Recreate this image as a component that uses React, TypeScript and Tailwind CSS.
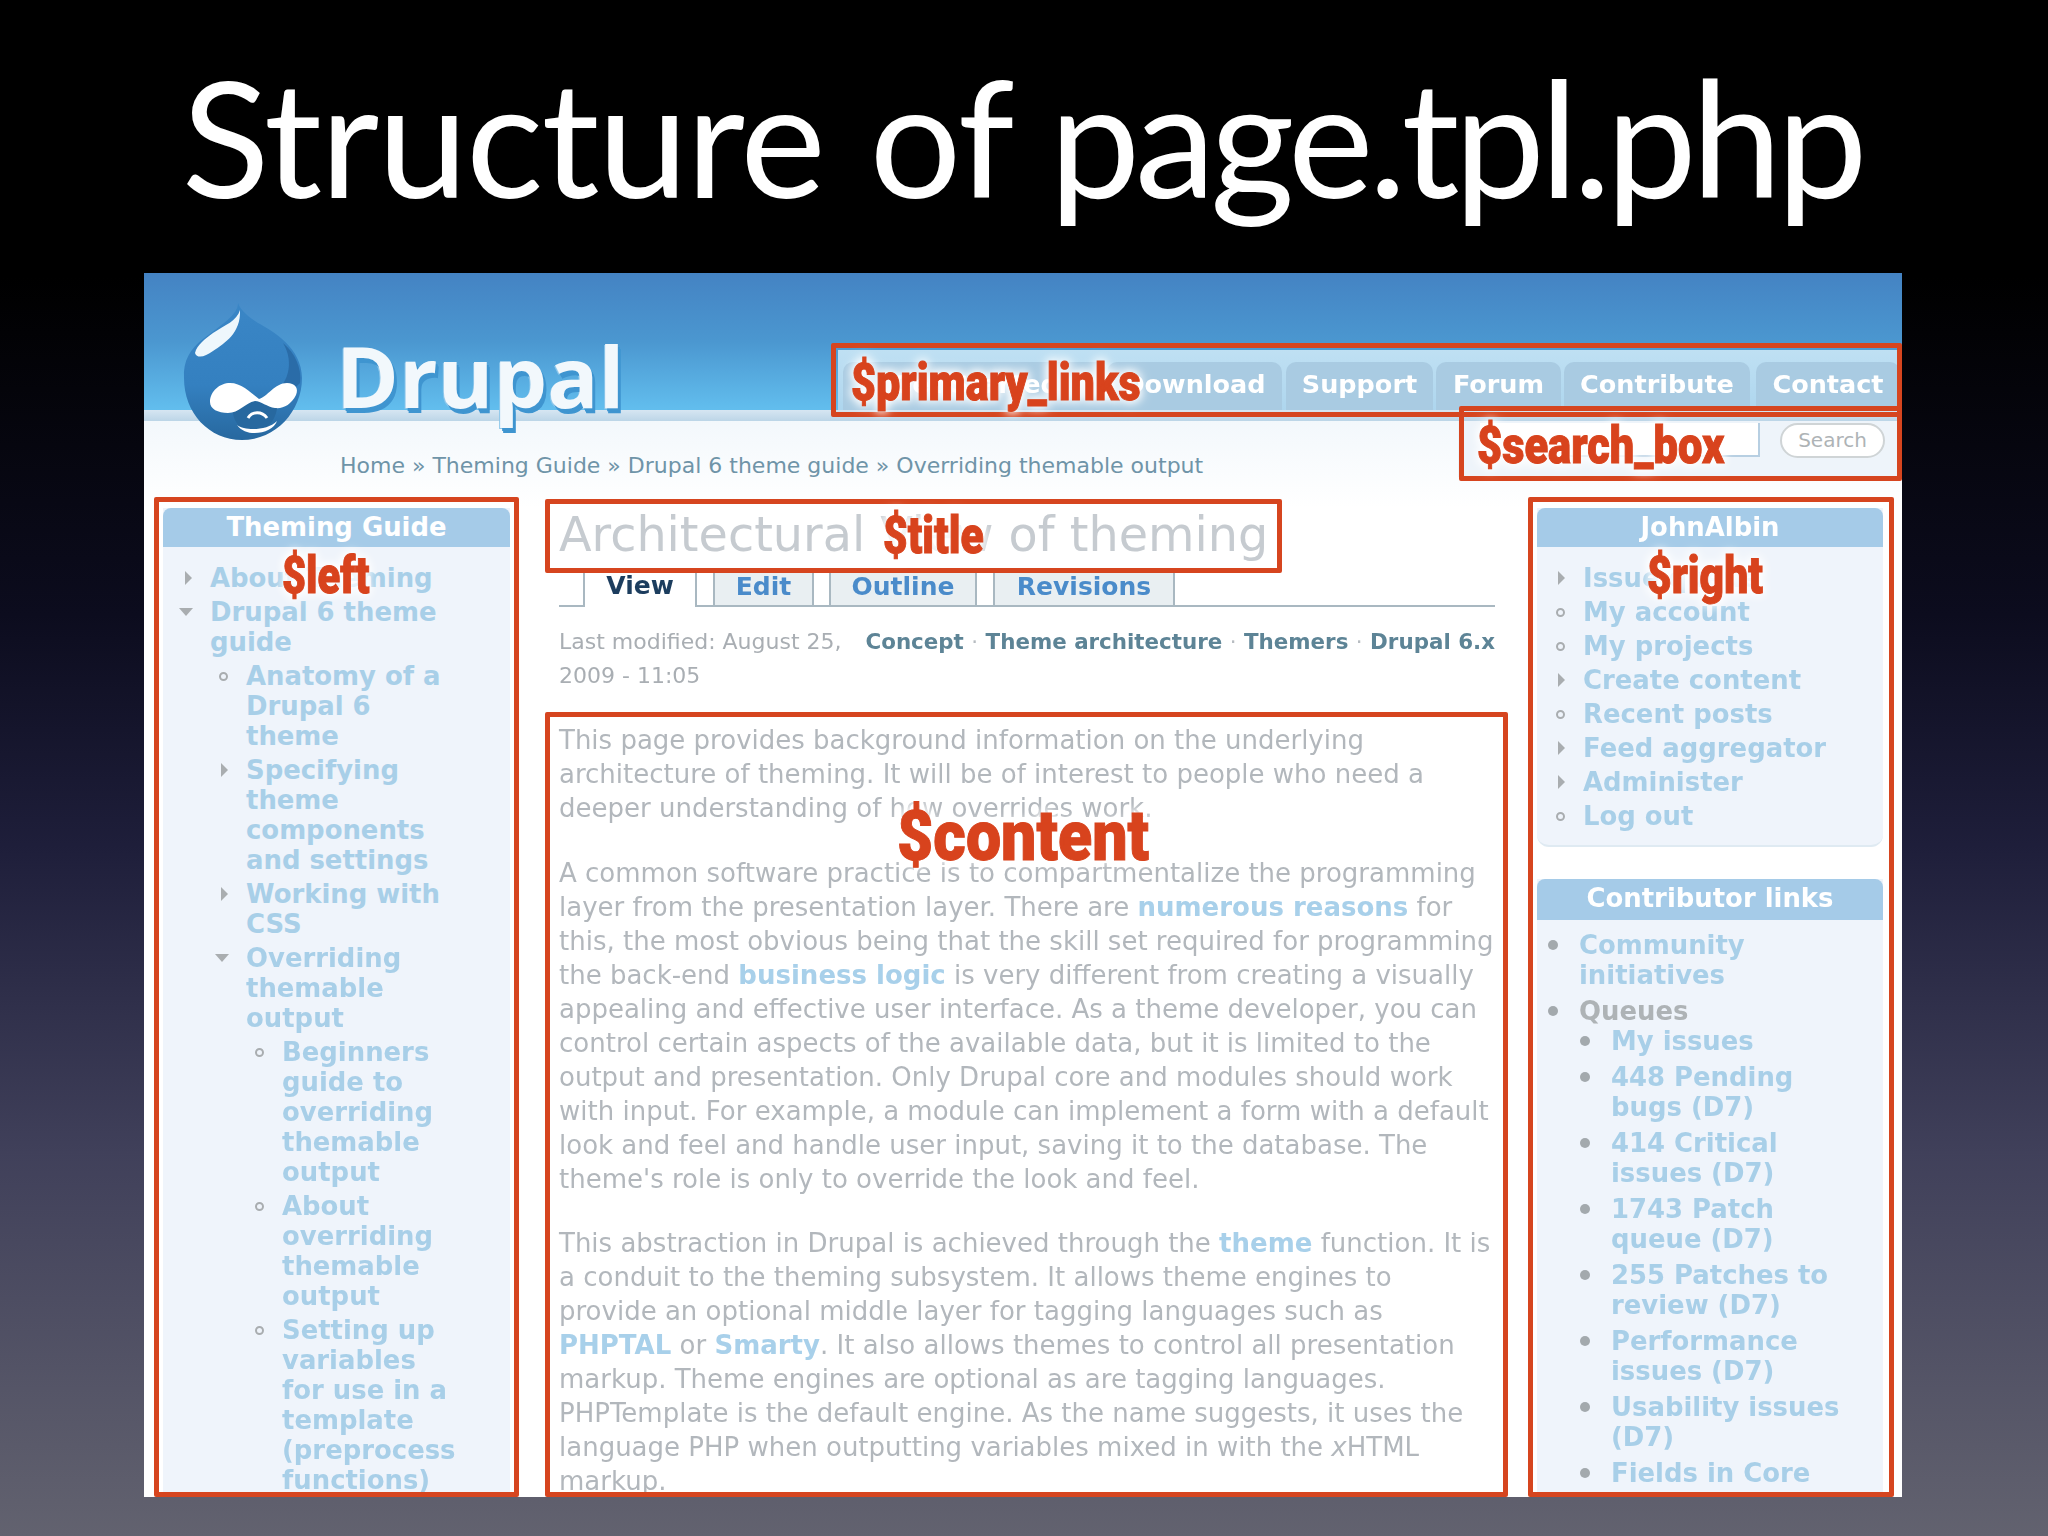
import React from "react";

type Item = { t: string; m: "r" | "d" | "o" | "f"; c?: Item[]; gray?: boolean };

const leftTree: Item[] = [
  { t: "About Theming", m: "r" },
  {
    t: "Drupal 6 theme\nguide",
    m: "d",
    c: [
      { t: "Anatomy of a\nDrupal 6\ntheme", m: "o" },
      { t: "Specifying\ntheme\ncomponents\nand settings", m: "r" },
      { t: "Working with\nCSS", m: "r" },
      {
        t: "Overriding\nthemable\noutput",
        m: "d",
        c: [
          { t: "Beginners\nguide to\noverriding\nthemable\noutput", m: "o" },
          { t: "About\noverriding\nthemable\noutput", m: "o" },
          { t: "Setting up\nvariables\nfor use in a\ntemplate\n(preprocess\nfunctions)", m: "o" },
        ],
      },
    ],
  },
];

const userTree: Item[] = [
  { t: "Issue queue", m: "r" },
  { t: "My account", m: "o" },
  { t: "My projects", m: "o" },
  { t: "Create content", m: "r" },
  { t: "Recent posts", m: "o" },
  { t: "Feed aggregator", m: "r" },
  { t: "Administer", m: "r" },
  { t: "Log out", m: "o" },
];

const contribTree: Item[] = [
  { t: "Community\ninitiatives", m: "f" },
  {
    t: "Queues",
    m: "f",
    gray: true,
    c: [
      { t: "My issues", m: "f" },
      { t: "448 Pending\nbugs (D7)", m: "f" },
      { t: "414 Critical\nissues (D7)", m: "f" },
      { t: "1743 Patch\nqueue (D7)", m: "f" },
      { t: "255 Patches to\nreview (D7)", m: "f" },
      { t: "Performance\nissues (D7)", m: "f" },
      { t: "Usability issues\n(D7)", m: "f" },
      { t: "Fields in Core", m: "f" },
    ],
  },
];

function Marker({ m }: { m: Item["m"] }) {
  return (
    <span className="w-[31px] h-[30px] shrink-0 flex items-center">
      {m === "r" && (
        <svg width="16" height="16" viewBox="0 0 16 16" className="ml-[2px]">
          <path d="M4 1 L11 8 L4 15 Z" fill="#a9adb0" />
        </svg>
      )}
      {m === "d" && (
        <svg width="16" height="10" viewBox="0 0 16 10" className="-ml-[1px]">
          <path d="M1 1 H15 L8 9 Z" fill="#a9adb0" />
        </svg>
      )}
      {m === "o" && <span className="ml-[4px] w-[9px] h-[9px] rounded-full border-2 border-[#a9adb0]" />}
      {m === "f" && <span className="w-[10px] h-[10px] rounded-full bg-[#a3a9ad]" />}
    </span>
  );
}

function Tree({ items, filled, nested }: { items: Item[]; filled?: boolean; nested?: boolean }) {
  return (
    <ul className={nested ? (filled ? "ml-[1px]" : "ml-[5px] mt-[4px]") : ""}>
      {items.map((it, i) => (
        <li key={i} className={`flex ${filled ? "mt-[6px] first:mt-0" : "mt-[4px] first:mt-0"}`}>
          <Marker m={it.m} />
          <div className="min-w-0">
            <div className={`whitespace-pre-line ${it.gray ? "text-[#aeb3b6]" : "text-[#a8cfe8]"}`}>{it.t}</div>
            {it.c && <Tree items={it.c} filled={filled} nested />}
          </div>
        </li>
      ))}
    </ul>
  );
}

function BlockTitle({ children }: { children: React.ReactNode }) {
  return (
    <div className="h-[39px] rounded-t-[8px] bg-[#a5cbe8] text-white text-center leading-[38px]">{children}</div>
  );
}

function L({ children }: { children: React.ReactNode }) {
  return <span className="font-bold text-[#a8d0ea]">{children}</span>;
}

function RedBox({ className, children }: { className: string; children?: React.ReactNode }) {
  return <div className={`absolute border-[5px] border-[#d6451f] rounded-[2px] ${className}`}>{children}</div>;
}

function Label({ className, children }: { className: string; children: React.ReactNode }) {
  return (
    <span
      className={`absolute whitespace-nowrap origin-left font-black text-[#d8431d] font-['Roboto',sans-serif] [-webkit-text-stroke:1px_#d8431d] [text-shadow:0_0_10px_#ffffff,0_0_10px_#ffffff,0_0_16px_#ffffff] ${className}`}
    >
      {children}
    </span>
  );
}

const tabs = [
  ["Get Started", "w-[264px]"],
  ["Download", "w-[175px]"],
  ["Support", "w-[147px] ml-[4px]"],
  ["Forum", "w-[125px] ml-[3px]"],
  ["Contribute", "w-[186px] ml-[3px]"],
  ["Contact", "w-[144px] ml-[6px]"],
];

export default function App() {
  return (
    <div className="w-[2048px] h-[1536px] overflow-hidden flex flex-col bg-[linear-gradient(to_bottom,#000000_0%,#000000_18%,#0c0c1e_40%,#1e1e3a_55%,#40405a_75%,#62626f_100%)]">
      <div className="h-[273px] w-full flex justify-center pr-[4px] shrink-0">
        <h1 className="mt-[36px] text-white text-[162px] leading-[200px] font-['Lato',sans-serif] whitespace-nowrap">
          <span className="tracking-[-1.8px]">Structure</span>{" "}
          <span className="ml-[4px] tracking-[-1.7px]">of</span>{" "}
          <span className="-ml-[5px] tracking-[-5.2px]">page.tpl.php</span>
        </h1>
      </div>

      <div className="relative ml-[144px] w-[1758px] h-[1224px] shrink-0 overflow-hidden bg-white">
        <div className="h-full flex flex-col blur-[0.7px] font-['DejaVu_Sans',sans-serif] font-bold text-[25.9px] leading-[30px]">
          {/* header */}
          <header className="relative z-10 h-[137px] shrink-0 flex bg-[linear-gradient(to_bottom,#4483c3_0%,#4b97d0_50%,#62beee_100%)]">
            <svg width="120" height="137" viewBox="0 0 120 137" className="ml-[39px] mt-[30px] shrink-0">
              <defs>
                <linearGradient id="drop" x1="0" y1="0" x2="0" y2="1">
                  <stop offset="0" stopColor="#3a86c6" />
                  <stop offset="0.6" stopColor="#3480c0" />
                  <stop offset="1" stopColor="#27689f" />
                </linearGradient>
              </defs>
              <path d="M55 0 C55 12 38 22 20 36 C7 46 0 58 1 75 C1 110 26 137 59 137 C93 137 119 108 119 75 C119 45 90 28 75 20 C66 14 58 8 55 0 Z" fill="url(#drop)" />
              <path d="M100 40 C112 60 105 82 88 92 C100 92 110 88 117 80 C119 65 112 50 100 40 Z" fill="#2a6ca8" />
              <path d="M57 7 C54 18 42 22 30 30 C22 36 14 42 12 50 C14 56 22 54 30 48 C42 40 58 30 57 7 Z" fill="#eef7fc" />
              <path d="M50 108 C58 100 66 98 72 98 C80 98 86 104 94 105 C92 122 78 132 62 128 C54 122 50 116 50 108 Z" fill="#27689f" />
              <path d="M27 99 C27 88 37 80 47 80 C58 80 66 88 76 96 C84 94 92 80 104 80 C112 80 116 85 113 92 C108 102 100 106 92 105 C84 104 78 98 72 98 C62 100 56 110 45 110 C35 110 27 106 27 99 Z" fill="#ffffff" />
              <path d="M65 115 C69 108 79 108 84 115" stroke="#ffffff" strokeWidth="3" fill="none" />
              <path d="M54 122 C62 128 84 128 94 118 C90 130 64 136 54 122 Z" fill="#ffffff" />
            </svg>
            <div className="ml-[33px] mt-[47px] text-[85px] leading-[110px] font-bold font-['Open_Sans',sans-serif] text-[#f2f8fc] [text-shadow:2px_3px_0_#3f95d0,3px_5px_0_#3f95d0,-1px_1px_0_#8cc6ea]">
              Drupal
            </div>
            <div className="ml-auto mt-[77px] h-[60px] w-[1064px] pl-[5px] pt-[12px] flex bg-[linear-gradient(to_bottom,#bfe0f3,#aed6ee)]">
              {tabs.map(([t, w]) => (
                <div key={t} className={`${w} h-[48px] rounded-t-[10px] bg-[#a9cbe2] text-white text-[25.5px] text-center leading-[44px]`}>
                  {t}
                </div>
              ))}
            </div>
          </header>
          <div className="h-[11px] shrink-0 bg-[linear-gradient(to_bottom,#d6e6f2,#bcd5e7)]" />

          {/* breadcrumb + search */}
          <div className="h-[87px] shrink-0 flex bg-[linear-gradient(to_bottom,#f3f8fc,#ffffff)]">
            <div className="ml-[196px] mt-[30px] text-[22px] font-normal text-[#6f94a8] whitespace-nowrap">
              Home » Theming Guide » Drupal 6 theme guide » Overriding themable output
            </div>
            <div className="ml-auto w-[444px] h-[56px] pt-[2px] pr-[17px] flex justify-end bg-[#eef4fa]">
              <div className="w-[280px] h-[34px] bg-white border-r-2 border-b-2 border-[#b7cfe2]" />
              <div className="ml-[20px] w-[105px] h-[35px] rounded-full bg-white border-2 border-[#cfd4d6] text-center font-normal text-[20px] leading-[30px] text-[#aeb3b6]">
                Search
              </div>
            </div>
          </div>

          {/* columns */}
          <main className="flex-1 min-h-0 flex pl-[19px]">
            <aside className="w-[347px] shrink-0 bg-[#eff4fb]">
              <BlockTitle>Theming Guide</BlockTitle>
              <div className="pt-[16px] pl-[16px]">
                <Tree items={leftTree} />
              </div>
            </aside>

            <section className="ml-[49px] w-[936px] shrink-0 font-normal text-[26px] leading-[34px] text-[#b2b7bc]">
              <h2 className="h-[62px] text-[47.7px] leading-[54px] font-normal text-[#c6cbd0] whitespace-nowrap">
                Architectural View of theming
              </h2>
              <div className="h-[37px] flex items-end pl-[24px] border-b-2 border-[#a9b8c1] font-bold text-[25px] leading-[30px]">
                <div className="w-[114px] h-[37px] -mb-[2px] bg-white border-x-2 border-[#a9b8c1] text-center text-[#1c3d5e] pt-[1px]">View</div>
                <div className="ml-[16px] w-[101px] h-[35px] border-x-2 border-t-2 border-[#a9b8c1] bg-[#e9eff2] text-center text-[#4a8bca]">Edit</div>
                <div className="ml-[15px] w-[148px] h-[35px] border-x-2 border-t-2 border-[#a9b8c1] bg-[#e9eff2] text-center text-[#4a8bca]">Outline</div>
                <div className="ml-[16px] w-[182px] h-[35px] border-x-2 border-t-2 border-[#a9b8c1] bg-[#e9eff2] text-center text-[#4a8bca]">Revisions</div>
              </div>
              <div className="mt-[18px] flex justify-between text-[22px]">
                <div className="whitespace-pre-line text-[#a9aeb3]">{"Last modified: August 25,\n2009 - 11:05"}</div>
                <div className="whitespace-nowrap font-bold text-[#5d8496] text-[21.4px]">
                  Concept <span className="font-normal text-[#b7bcc1]">·</span> Theme architecture <span className="font-normal text-[#b7bcc1]">·</span> Themers <span className="font-normal text-[#b7bcc1]">·</span> Drupal 6.x
                </div>
              </div>
              <div className="mt-[30px] whitespace-nowrap">
                <p>
                  This page provides background information on the underlying<br />
                  architecture of theming. It will be of interest to people who need a<br />
                  deeper understanding of how overrides work.
                </p>
                <p className="mt-[31px]">
                  A common software practice is to compartmentalize the programming<br />
                  layer from the presentation layer. There are <L>numerous reasons</L> for<br />
                  this, the most obvious being that the skill set required for programming<br />
                  the back-end <L>business logic</L> is very different from creating a visually<br />
                  appealing and effective user interface. As a theme developer, you can<br />
                  control certain aspects of the available data, but it is limited to the<br />
                  output and presentation. Only Drupal core and modules should work<br />
                  with input. For example, a module can implement a form with a default<br />
                  look and feel and handle user input, saving it to the database. The<br />
                  theme's role is only to override the look and feel.
                </p>
                <p className="mt-[30px]">
                  This abstraction in Drupal is achieved through the <L>theme</L> function. It is<br />
                  a conduit to the theming subsystem. It allows theme engines to<br />
                  provide an optional middle layer for tagging languages such as<br />
                  <L>PHPTAL</L> or <L>Smarty</L>. It also allows themes to control all presentation<br />
                  markup. Theme engines are optional as are tagging languages.<br />
                  PHPTemplate is the default engine. As the name suggests, it uses the<br />
                  language PHP when outputting variables mixed in with the <i>x</i>HTML<br />
                  markup.
                </p>
              </div>
            </section>

            <aside className="ml-[42px] w-[346px] shrink-0">
              <div className="bg-[#eff4fb] rounded-b-[12px] border-b-2 border-[#dfeaf2]">
                <BlockTitle>JohnAlbin</BlockTitle>
                <div className="pt-[16px] pb-[14px] pl-[15px]">
                  <Tree items={userTree} />
                </div>
              </div>
              <div className="mt-[32px] bg-[#eff4fb] h-[700px]">
                <div className="h-[41px] rounded-t-[8px] bg-[#a5cbe8] text-white text-center leading-[39px]">Contributor links</div>
                <div className="pt-[10px] pl-[11px]">
                  <Tree items={contribTree} filled />
                </div>
              </div>
            </aside>
          </main>
        </div>

        {/* annotation overlays */}
        <RedBox className="left-[687px] top-[70px] w-[1071px] h-[74px]">
          <Label className="left-[15px] top-[5px] text-[52px] leading-[60px] scale-x-[0.83]">$primary_links</Label>
        </RedBox>
        <RedBox className="left-[1315px] top-[133px] w-[443px] h-[75px]">
          <Label className="left-[13px] top-[5px] text-[52px] leading-[60px] scale-x-[0.835]">$search_box</Label>
        </RedBox>
        <RedBox className="left-[10px] top-[224px] w-[365px] h-[1000px]">
          <Label className="left-[123px] top-[44px] text-[52px] leading-[60px] scale-x-[0.8]">$left</Label>
        </RedBox>
        <RedBox className="left-[401px] top-[226px] w-[737px] h-[74px]">
          <Label className="left-[333px] top-[2px] text-[52px] leading-[60px] scale-x-[0.82]">$title</Label>
        </RedBox>
        <RedBox className="left-[401px] top-[439px] w-[963px] h-[785px]">
          <Label className="left-[347px] top-[79px] text-[70px] leading-[80px] scale-x-[0.895]">$content</Label>
        </RedBox>
        <RedBox className="left-[1384px] top-[224px] w-[366px] h-[1000px]">
          <Label className="left-[114px] top-[44px] text-[52px] leading-[60px] scale-x-[0.82]">$right</Label>
        </RedBox>
      </div>
    </div>
  );
}
